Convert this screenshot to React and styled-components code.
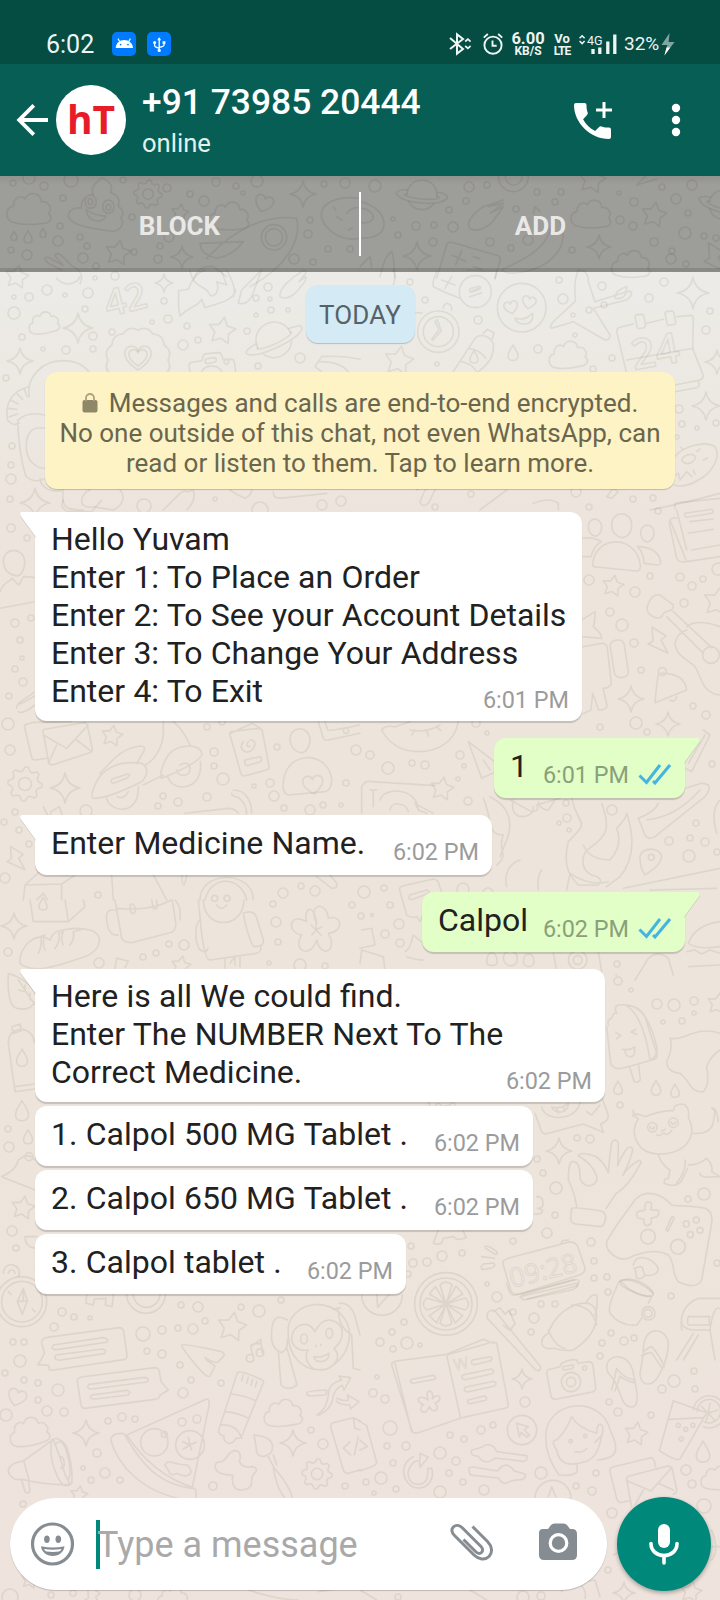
import React from 'react';
import styled, { createGlobalStyle } from 'styled-components';

const Global = createGlobalStyle`
  * { box-sizing: border-box; }
  body { margin: 0; font-family: Roboto, "Noto Sans", sans-serif; background: #eee4dc; }
`;

const Screen = styled.div`
  width: 720px;
  height: 1600px;
  display: flex;
  flex-direction: column;
  overflow: hidden;
`;

/* ---------- status bar ---------- */

const StatusBar = styled.div`
  flex: none;
  height: 64px;
  padding: 24px 0 0 46px;
  display: flex;
  align-items: center;
  background: #054c43;
  color: #eef5f3;
`;
const Clock = styled.span`
  width: 66px;
  padding-top: 1px;
  font-size: 25px;
  line-height: 39px;
`;
const AppBadge = styled.svg`
  width: 24px;
  height: 24px;
  margin-right: 11px;
  border-radius: 5px;
  background: #007bff;
`;
const StatusIcons = styled.div`
  margin-left: auto;
  margin-right: 45px;
  display: flex;
  align-items: center;
`;
const StatusGlyph = styled.svg`
  display: block;
  width: ${(p) => p.$w}px;
  height: 24px;
  margin-right: ${(p) => p.$gap || 0}px;
`;
const Stacked = styled.div`
  width: ${(p) => p.$w}px;
  margin-right: ${(p) => p.$gap}px;
  display: flex;
  flex-direction: column;
  align-items: center;
  white-space: nowrap;
  font-weight: 700;
  span:first-child { font-size: ${(p) => p.$top}px; line-height: 13px; }
  span:last-child { font-size: 12px; line-height: 12px; }
`;
const Battery = styled.span`
  width: 37px;
  font-size: 19px;
  line-height: 24px;
`;

/* ---------- chat header ---------- */

const Header = styled.header`
  flex: none;
  height: 112px;
  padding-left: 16px;
  display: flex;
  align-items: center;
  background: #075e54;
  color: #fff;
`;
const BackIcon = styled.svg`
  width: 33px;
  height: 34px;
`;
const Avatar = styled.div`
  width: 70px;
  height: 70px;
  margin-left: 7px;
  border-radius: 50%;
  background: #fff;
  color: #e81c28;
  display: flex;
  justify-content: center;
  font: 700 39px/67px "Open Sans", sans-serif;
`;
const Contact = styled.div`
  flex: 1;
  margin-left: 16px;
  height: 112px;
  padding-top: 17px;
`;
const ContactName = styled.div`
  font-size: 35.4px;
  font-weight: 500;
  line-height: 43px;
  white-space: nowrap;
`;
const Presence = styled.div`
  font-size: 25.6px;
  line-height: 39px;
  color: #e3f1ee;
`;
const HeaderIcon = styled.svg`
  width: ${(p) => p.$w}px;
  height: 44px;
  margin-right: ${(p) => p.$gap}px;
`;

/* ---------- conversation ---------- */

const Chat = styled.main`
  flex: 1;
  position: relative;
  display: flex;
  flex-direction: column;
  background: linear-gradient(#ecebe7 0, #ecebe7 110px, #ede5dd 330px, #ede5dc 900px, #eee3dd 1424px);
`;
const Wallpaper = styled.svg`
  position: absolute;
  inset: 0;
  width: 720px;
  height: 1424px;
  fill: none;
  stroke: rgba(130, 128, 100, 0.14);
  stroke-width: 1.6px;
  stroke-linejoin: round;
  stroke-linecap: round;
  font-family: "Open Sans", sans-serif;
  g > * { vector-effect: non-scaling-stroke; }
`;
const ActionBar = styled.div`
  position: relative;
  flex: none;
  height: 96px;
  display: flex;
  align-items: center;
  background: linear-gradient(rgba(0, 0, 0, 0.38), rgba(0, 0, 0, 0.335) 8px);
  border-bottom: 4px solid rgba(0, 0, 0, 0.07);
`;
const Action = styled.button`
  flex: 1;
  padding: 8px 0 0;
  border: 0;
  background: none;
  color: #e9e8e6;
  font: 700 26px/32px Roboto, sans-serif;
`;
const Divider = styled.div`
  width: 2px;
  height: 64px;
  margin-top: 4px;
  background: #fff;
`;
const Messages = styled.div`
  position: relative;
  flex: 1;
  display: flex;
  flex-direction: column;
  align-items: flex-start;
  padding: 13px 35px 0;
`;
const DayChip = styled.div`
  align-self: center;
  width: 109px;
  height: 58px;
  margin-bottom: 29px;
  border-radius: 12px;
  background: #d4eaf4;
  box-shadow: 0 1px 1px rgba(0, 0, 0, 0.2);
  color: #56626a;
  font-size: 26px;
  line-height: 61px;
  letter-spacing: 0.2px;
  text-align: center;
`;
const Notice = styled.div`
  align-self: center;
  width: 630px;
  height: 117px;
  margin-bottom: 23px;
  padding-top: 16px;
  border-radius: 12px;
  background: #fef3c4;
  box-shadow: 0 1px 1px rgba(0, 0, 0, 0.2);
  color: #6a664e;
  font-size: 26px;
  line-height: 30px;
  text-align: center;
  white-space: nowrap;
`;
const Lock = styled.svg`
  width: 16px;
  height: 20px;
  margin-right: 11px;
  vertical-align: -1px;
`;
const Bubble = styled.div`
  position: relative;
  align-self: ${(p) => (p.$out ? 'flex-end' : 'flex-start')};
  width: ${(p) => p.$w}px;
  min-height: 60px;
  margin-bottom: ${(p) => (p.$grouped ? 4 : 17)}px;
  padding: ${(p) => (p.$multi ? '8px 13px 11px 16px' : '9px 13px 13px 16px')};
  display: flex;
  flex-direction: column;
  align-items: flex-start;
  border-radius: 12px;
  ${(p) => p.$tail && (p.$out ? 'border-top-right-radius: 0;' : 'border-top-left-radius: 0;')}
  background: ${(p) => (p.$out ? '#e1ffc7' : '#fff')};
  box-shadow: 0 1.5px 1px rgba(0, 0, 0, 0.17);
`;
const Tail = styled.svg`
  position: absolute;
  top: 0;
  ${(p) => (p.$out ? 'right: -15px; transform: scaleX(-1);' : 'left: -15px;')}
  width: 16px;
  height: 26px;
  fill: ${(p) => (p.$out ? '#e1ffc7' : '#fff')};
  filter: drop-shadow(0 1px 0.5px rgba(0, 0, 0, 0.15));
`;
const Line = styled.div`
  color: #212121;
  font-size: 32px;
  line-height: 38px;
  white-space: pre;
  word-spacing: 0.3px;
`;
const LastRow = styled.div`
  width: 100%;
  height: 38px;
  display: flex;
  justify-content: space-between;
  align-items: flex-end;
`;
const Meta = styled.div`
  display: flex;
  align-items: center;
  gap: 10px;
  margin-bottom: ${(p) => (p.$multi ? -4 : -4)}px;
  color: ${(p) => (p.$out ? '#8aa07a' : '#9b9b9b')};
  font-size: 23.4px;
  line-height: 27px;
  white-space: nowrap;
`;
const Ticks = styled.svg`
  width: 33px;
  height: 22px;
  margin: 0 1px 3px -1px;
`;

/* ---------- composer ---------- */

const Composer = styled.footer`
  position: relative;
  flex: none;
  height: 103px;
  padding: 0 9px 9px 10px;
  display: flex;
  align-items: center;
  gap: 10px;
`;
const InputPill = styled.div`
  width: 597px;
  height: 92px;
  padding: 0 26px 0 21px;
  display: flex;
  align-items: center;
  border-radius: 46px;
  background: #fff;
  box-shadow: 0 1px 1px rgba(0, 0, 0, 0.2);
`;
const FieldIcon = styled.svg`
  width: 44px;
  height: 44px;
  margin-left: ${(p) => p.$ml || 0}px;
  overflow: visible;
`;
const Caret = styled.i`
  width: 4px;
  height: 49px;
  margin-left: 21px;
  background: #00897b;
`;
const Placeholder = styled.span`
  flex: 1;
  margin-left: -3px;
  padding-top: 1px;
  color: #a9a9a9;
  font-size: 36px;
  line-height: 44px;
  white-space: nowrap;
`;
const MicButton = styled.button`
  width: 94px;
  height: 94px;
  padding: 0;
  border: 0;
  border-radius: 50%;
  background: #00897b;
  box-shadow: 0 2px 4px rgba(0, 0, 0, 0.3);
  display: flex;
  align-items: center;
  justify-content: center;
`;

/* ---------- wallpaper doodles ---------- */

const bubbles = `13,183,3 29,178,6 44,186,4 71,180,7 63,198,3 123,180,3 167,188,4 190,194,3 204,201,5 216,182,4 236,186,3 243,193,2 257,181,6 345,183,5 324,184,3 60,226,3 80,237,3 58,241,5 11,250,3 27,255,5 87,246,3 83,258,5 96,266,3 132,217,3 134,252,3 158,259,4 160,246,3 169,237,5 310,220,3 308,234,4 294,259,5 313,262,3 328,249,3 350,249,3
375,186,6 469,187,5 487,185,3 466,201,3 393,219,2 449,210,3 416,226,4 434,225,3 453,227,5 398,235,3 433,242,4 490,242,4 511,248,3 516,209,3 537,192,3 561,192,3 555,202,3 634,202,4 619,193,2 662,187,3 692,185,5 676,199,5 688,213,3 620,220,4 633,226,4 654,242,4 685,233,6 704,236,3 716,238,3 672,251,3 671,259,5 686,264,3 572,250,3 528,240,5
14,297,2 29,297,4 47,290,5 65,295,2 88,293,5 95,278,2 115,276,4 14,313,6 22,337,3 85,309,3 93,336,4 43,349,2 66,350,4 93,349,3 6,378,3 12,446,3 11,465,3 11,479,5 10,499,3 112,332,3 152,322,2 168,319,4 164,301,3 187,326,3 183,345,5 198,340,3 247,331,3 256,315,2 271,310,3 256,298,3 270,299,2 268,287,4 288,310,2 300,358,5 258,366,3 144,506,7 215,499,2 322,505,5 341,501,5 260,510,8
410,282,3 425,300,3 478,320,4 437,364,2 575,335,2 538,349,4 559,280,3 563,299,5 602,286,4 604,305,3 589,310,3 573,315,2 612,358,3 593,369,3 664,282,4 649,298,4 710,311,3 706,330,4 679,409,4 682,424,3 697,428,2 716,423,3 677,437,2 471,494,3 576,492,5 633,499,3 653,498,3 435,507,3 589,507,3
11,528,4 27,538,3 31,618,3 15,623,4 20,640,3 22,658,2 15,669,3 23,682,4 9,696,3 8,724,6 10,750,5 207,727,3 222,722,3 214,752,4 214,766,3 223,779,6 277,747,3 254,786,2 270,783,4 274,796,5 163,796,3 158,806,3 178,802,4 207,797,4 86,811,6 15,812,3 19,830,3 4,822,3 29,844,3 284,808,3 310,810,5 323,805,3 341,805,2 346,783,3 356,750,5 5,878,5 283,893,5 301,886,3 315,891,5 98,895,3
658,511,3 589,580,5 635,592,5 650,576,3 680,577,4 692,586,4 703,579,3 718,569,6 684,603,4 610,612,4 622,625,6 634,643,4 641,670,3 600,727,3 636,723,6 647,732,3 693,706,3 706,715,4 476,723,4 487,733,2 370,755,4 388,768,6 412,763,3 425,765,4 460,755,4 464,766,2 468,801,4 458,779,2 712,764,3 696,823,3 669,841,4 690,838,3 705,842,4 689,856,6 717,852,3 612,810,5 567,818,4 559,823,2 569,830,2 566,803,3 364,892,6 384,888,3 390,905,3 361,916,3 372,915,1.5 399,924,5 385,934,4 400,943,4 617,964,3 463,889,6 488,893,5
273,904,3 276,922,5 278,942,3 352,905,3 8,952,4 99,963,5 143,957,3 156,953,3 169,944,3 184,945,5 8,1129,3 9,1147,5 12,1231,5 16,1248,3 269,963,2 300,965,6 325,966,3
618,981,4 631,990,2 657,1004,5 674,1005,6 694,1001,4 694,1013,2 682,1021,3 663,1022,2 620,1105,3 577,1138,3 590,1139,4 537,1159,3 543,1173,3 556,1188,6 555,1215,3 547,1233,5 513,1241,3 591,1242,4 594,1261,3 594,1278,3 607,1277,3 608,1292,3 688,1199,3 704,1194,6 717,1263,3 411,1246,3 413,1263,4 427,1262,4 442,1256,5 462,1253,3 487,1284,2 408,1274,3
62,1312,4 54,1327,4 74,1317,3 90,1318,2 13,1342,3 24,1342,3 20,1361,6 5,1373,3 24,1380,3 38,1383,3 58,1390,6 38,1400,3 47,1411,5 64,1412,4 6,1415,6 108,1421,3 122,1417,4 135,1419,3 97,1453,4 83,1468,2 105,1473,5 91,1480,3 120,1480,3 181,1305,3 198,1307,5 143,1334,7 162,1330,4 178,1328,3 193,1329,5 205,1321,3 147,1351,3 162,1354,4 180,1365,3 191,1380,3 183,1393,5 221,1383,3 241,1307,3 259,1311,6 281,1300,3 311,1430,3 323,1444,5 213,1486,4 345,1486,3 182,1422,4 197,1419,4 10,1597,8 51,1595,3 73,1593,3 135,1595,6 23,1504,3
404,1322,3 392,1332,3 380,1342,4 393,1349,3 407,1343,6 420,1345,2 377,1377,2 373,1393,4 385,1399,4 390,1428,7 387,1446,3 406,1446,4 393,1463,3 381,1478,6 366,1482,3 374,1493,2 396,1489,3 450,1435,3 464,1439,3 481,1430,4 493,1425,3 440,1453,6 456,1461,4 449,1473,3 463,1482,3 440,1492,6 484,1490,5 525,1402,5 541,1473,6 596,1473,3 576,1486,3 592,1491,4 612,1513,5 541,1304,3 555,1304,3 534,1318,5 531,1332,3 513,1312,3 497,1297,5 611,1333,3 602,1343,3 624,1341,4 634,1338,3 600,1356,3 671,1296,3 694,1371,3 674,1381,6 662,1389,4 695,1389,3 609,1402,3 618,1412,4 651,1415,3 686,1470,5 692,1484,4 704,1506,7 608,1570,3 523,1597,6 541,1596,4 398,1597,3`
  .split(/\s+/)
  .map((s) => s.split(',').map(Number));

const stars = [[180, 213, 9], [118, 253, 13], [17, 277, 12], [222, 331, 14], [399, 361, 15], [592, 180, 14], [654, 215, 13], [112, 736, 11], [613, 586, 11], [442, 789, 12], [718, 602, 15], [181, 966, 10], [23, 1208, 12], [718, 1004, 11], [232, 1327, 15], [636, 1434, 12], [691, 1592, 11], [79, 1495, 9], [30, 1580, 9]];
const sparkles = [[303, 194, 13], [182, 257, 11], [417, 256, 14], [599, 247, 12], [78, 328, 15], [20, 361, 13], [164, 283, 9], [35, 503, 15], [693, 293, 16], [706, 406, 14], [717, 362, 12], [65, 788, 15], [631, 699, 13], [668, 724, 12], [14, 926, 13], [559, 1151, 13], [86, 1433, 13], [293, 1443, 13], [522, 1379, 10], [624, 1593, 11]];
const clouds = [[28, 209, 1.45, 0], [228, 216, 1.3, 0], [590, 214, 1.3, 0], [630, 264, 1.25, 0], [43, 323, 1, -10], [567, 355, 1.25, -6], [28, 1432, 1.3, -12], [282, 1413, 1.25, -5], [717, 1478, 1.1, 0], [172, 1598, 1, 0]];
const hearts = [[264, 203, 1, 18], [138, 357, 1.45, 0], [138, 357, 1, 0], [17, 1397, 1, 18], [313, 784, 1.1, -6], [511, 307, 0.75, -12], [529, 302, 0.75, 12]];
const drops = [[14, 236, 0.6], [28, 237, 0.8], [43, 233, 0.6], [513, 353, 1], [22, 1111, 1.3], [28, 1137, 0.9], [618, 1088, 0.85], [656, 1088, 0.95], [675, 1091, 0.85], [703, 1452, 1.35], [22, 1058, 1.1], [474, 357, 0.8], [43, 904, 0.8]];
const gears = [[148, 194, 14], [25, 784, 17], [317, 1474, 15]];
const planets = [[422, 195, 15, 5], [274, 340, 18, -25], [724, 205, 15, 15]];
const bolts = [[657, 640, 1], [15, 858, 0.9], [714, 257, 1.1], [92, 1597, 0.9]];

const polar = (r, a) => `${(r * Math.cos(a)).toFixed(1)} ${(r * Math.sin(a)).toFixed(1)}`;
const starPath = (r) =>
  'M' + Array.from({ length: 10 }, (_, i) => polar(i % 2 ? r * 0.52 : r, (i * Math.PI) / 5 - 1.4)).join('L') + 'Z';
const sparklePath = (r) => `M0 ${-r}Q${r * 0.15} ${-r * 0.15} ${r} 0Q${r * 0.15} ${r * 0.15} 0 ${r}Q${-r * 0.15} ${r * 0.15} ${-r} 0Q${-r * 0.15} ${-r * 0.15} 0 ${-r}Z`;
const gearPath = (r) =>
  'M' + Array.from({ length: 32 }, (_, i) => polar(i % 4 < 2 ? r : r * 0.78, (i * Math.PI) / 16)).join('L') + 'Z';
const badgePath =
  'M' + Array.from({ length: 13 }, (_, i) => {
    const a = (i * 2 * Math.PI) / 12;
    return i ? `Q${polar(36, a - Math.PI / 12)} ${polar(30, a)}` : polar(30, a);
  }).join('') + 'Z';

/* Larger drawings, grouped by the patch of wall they belong to; three units make one pixel. */
const patches = [
  [0, 0, `M205 650c0-20 20-30 40-25c-5-25 15-40 35-42c-10-25 5-30 25-50c25 10 35 25 27 45c20 5 30 20 22 40c15 10 20 25 8 35c15 20-5 45-35 40c-60-10-110-15-122-43z M258 628c20 15 40 20 60 20c-10 25-55 20-60-20z M255 605a17 20 0 1 0 34 0a17 20 0 1 0-34 0 M264 605a7 9 0 1 0 14 0a7 9 0 1 0-14 0 M308 620a17 20 0 1 0 34 0a17 20 0 1 0-34 0 M318 622a7 9 0 1 0 14 0a7 9 0 1 0-14 0
   M620 775C700 690 800 640 890 655C905 720 860 800 750 860 M600 730l130-5c-20 25-50 45-80 50c-25-5-50-20-50-45z M784 712a38 38 0 1 0 76 0a38 38 0 1 0-76 0 M796 712a26 26 0 1 0 52 0a26 26 0 1 0-52 0 M580 840c10-30 30-45 60-40l40 30 M145 790q-20-20 0-18l45 25l-25-30q5-12 20 0l30 30c40 20 30 40 25 55 M145 790l40 20
   M1080 595c-60-8-125 10-115 60c15 45 70 70 115 60 M1040 640c10-15 25-18 40-18 M1010 650l15 10M1000 620l8 12M1045 690l12-6`],
  [360, 0, `M0 605c50 10 80 45 70 80c-10 25-40 30-70 30 M0 625c25 0 40 15 40 30c-10 15-30 15-40 12 M430 600l-60 20c-30 20-55 50-40 65c20 15 60-5 75-30l25-35l-40 20l40-30l-45 10z M415 530a45 45 0 0 0 90 0 M436 530a25 25 0 0 0 50 0
   M425 810c60-30 140-60 150-140l20-20c20 50 25 90-30 135c-40 30-120 45-140 25z M565 690l30 10 M260 735q5-10 15-8l140 40q8 5 5 15l-15 55M260 735l-30 100M276 766l40 18M305 752l-18 42M340 800l25 8 M340 770l20 6 M830 555l30-30M830 555l60-18 M60 830c10-40 15-60 35-75c10 20 5 50 10 80M0 800l30-30l5 30
   M520 640l5-20l15 15`],
  [0, 270, `M540 138c-10-40 0-60-5-75l30-5c15-40 30-50 50-58M540 138c30-30 50-25 65-50l10 25c50-15 90-25 92-55M570 0c10 60 45 40 60 75c15 10 30-15 20-40l30 10l-15-40M700 80c10-30-10-60-20-80M715 100l10-40l60-60M715 100c20 5 30-5 40-20l30-80 M840 80c-5-25 40-60 65-75q15-10 12 5l-20 25l20-15q5 10-15 30c-20 30-45 40-62 30z M170 25c20 25 60 20 70-5
   M570 305l-3-18q0-8 8-10l30-5l5-15q3-6 10-6l35-3q8 0 10 8l4 12l25 0q8 0 9 8l4 30M615 275q0-8 6-9l20-3q8 0 8 6q0 6-6 8l-20 4q-7 0-8-6z M605 305c10-22 50-22 60 0 M672 275a7 7 0 1 0 14 0a7 7 0 1 0-14 0 M945 290l20-30q60-5 115 8M945 290l20 15M960 275q60 0 85 30
   M88 380c-10-60 40-108 100-108c40 0 65 15 80 35 M88 350c-50 10-75 50-65 100c10 15 25 15 35 10M72 356l10 25M50 370l18 18M32 390l22 12M25 415l25 3M28 440l25-8 M55 450c20-20 50-22 78-15M53 450c2 60 12 130 25 170c20 15 40 15 57 5M135 475c-50-10-60 30-55 70c5 30 30 50 55 50M120 625c0 30 40 45 70 35
   M190 660c-10 60 20 60 60 60M270 660c-30 10-40 60 10 50l60 10c40-20 30-50 20-60M490 720l50-50q10-10 20-5q10 0 20-5q10 30-20 60M690 660q20 15 45 25q20-10 20-25M820 665c0 20 10 20 40 18l120-13`],
  [360, 270, `M230 5q-15 35-10 45q40 20 80 35M320 0c30 0 90 5 90 0l-5 25M245 30l40 15M275 20l-20 35 M298 65a48 48 0 1 0 96 0a48 48 0 1 0-96 0 M330 65l30-12M330 80l35-12 M330 65q-5-8 5-10l20-6q10 0 5 8l-25 10z M100 0q10 15 0 45
   M412 113a73 73 0 1 0 146 0a73 73 0 1 0-146 0 M465 145c20 5 40 0 52-15c5 15-5 32-20 32c-15 0-30-5-32-17z M655 0c-20 50-5 70-10 95l-60 55q-20 20-10 25l65-20l95 55q15 0 15-15l-50-80l100-25c20-15 20-30 0-25l-95 30l-20-60c0-25-10-35-30-35z M765 85c0-20 15-30 35-35c0 25-10 40-35 35z
   M173 185a62 62 0 1 0 124 0a62 62 0 1 0-124 0 M190 185a45 45 0 1 0 90 0a45 45 0 1 0-90 0 M225 155l12 25l-20 25q-5 3 2 6l25-28l-12-34z M250 115c0-20 25-20 25 5 M165 130q10-5 20 0 M280 305l65-100c20-20 60 0 55 30c0 20-10 45-45 70M325 235q35 5 52 30M305 275q30 5 45 30M370 190l12-12l20 10l-5 18
   M800 310l-30-125q0-10 10-13l40-10M860 160l50-12M950 140l42-4q8 0 8 10l-2 90l32 80q0 10-10 14l-75 15M800 270l200-35M825 140q0-5 8-6l13-1q5 0 6 8l5 25q0 8-8 8l-12 2q-5 0-6-6z M915 130q0-5 8-6l13-1q5 0 6 8l5 25q0 8-8 8l-12 2q-5 0-6-6z M945 365l65-12q12-5 5-18
   M945 560c20-30 90-50 120-30c20 30-10 80-50 100c-30 20-60 20-72 15M965 570c5-15 30-22 40-12c5 15-25 35-40 12z M1010 545l10-8M1030 570l12-6M1000 600l5 12M970 540l-8-8M940 620l15-10l5 20l20-25l15 15 M170 660l25-15M195 660l40-20l-30 60q-20 15-25-5z M520 700q50-20 75 0v20 M740 680l20-25l15 10l-20 20z M870 720q100-20 210-50M360 720l80-60`],
  [0, 500, `M10 185c0-45 62-45 64 0c0 30-15 45-25 42c-25-3-37-20-39-42z M0 325l105-20M0 275c10-30 30-30 36-40l20 20l15-25q30 0 34 5M55 610l55-38M50 625q0-15 15-15l45-25M55 635q10 10 50-20M190 0c-10 20 0 35 25 35h60l30-35
   M130 700q-5-8 5-12l115-20q10 0 12 8l15 70q0 10-8 12l-110 36q-10 2-13-8z M130 705l70 40l65-70M145 790l25-55M275 755l-45-35 M80 672q-10 5-5 15l20 85q2 8 10 8l35-5M75 675l25-8l115-3
   M280 895q-10-5 5-40c20-50 70-75 140-65c20 10 20 35 0 55c-30 15-100 50-145 50zM300 820c30-30 60-75 120-82q20 0 10 18l-20 35M335 838l48-16q12 2-2 12l-40 16q-12-2-6-12M318 890c10 50 100 60 97-30M352 890q20 10 33-15M485 835q-10-20 20-70c30-35 95-35 100-5c5 10-30 40-120 75zM503 830c20 55 110 35 98-45M530 810c0 20 40 25 40-5c0-15-15-20-30-10M490 660v40c0 40-30 85-55 95M430 855l60-30M520 665q30 25 50 70
   M690 705q-3-8 5-11l80-9q10 0 12 8l20 105q2 10-8 12l-65 18q-10 0-12-10zM692 700l65-30l25 15M730 725q-15 20 5 30q20 5 30-20q0-15-15-15M745 725q-10 15 5 15M735 780l45-10q8 5 2 15l-42 12q-8-5-5-17M870 720c0-45 58-45 60 0c0 22-15 40-27 38c-18-3-30-15-33-38zM850 850c5-100 130-100 145-15c0 25-5 35-20 40l-110 10c-15-5-17-20-15-35z
   M955 665l15 50q5 8 15 5l95-20M975 665l8 25q5 5 95-15M1030 692a8 8 0 1 0 16 0a8 8 0 1 0-16 0M130 920l15 30q5 5 8-15l25-15l10 30 M700 870c35 0 55 30 55 70M695 880q0 10 20 12c20 15 25 30 25 50M555 940l130-15q20 0 30 15
   M75 1155l60-55l10 20l60 5M75 1155l-5 45M75 1155l110-3l40-27M185 1152v48M110 1200l20-20l12 20M335 1125l5 75M460 1125l40 75M545 1125q5 60 15 0M600 1200c0-90 160-90 160 0M615 1200c20-80 110-70 125 0M635 1195a9 9 0 1 0 18 0a9 9 0 1 0-18 0M672 1195a9 9 0 1 0 18 0a9 9 0 1 0-18 0M950 1130l45 35q20 0 15-15l-20-25`],
  [360, 500, `M685 80c0-30 38-30 40 0c0 20-12 30-20 28c-12-3-20-12-20-28z M755 75c0-45 60-45 60 0c0 25-15 38-30 38c-15-3-30-15-30-38zM842 98c0-30 40-30 40 0c0 18-12 28-20 28c-12-3-20-12-20-28zM698 195c5-90 130-95 143 0q2 20-15 18l-115-12q-12 0-13-6zM668 115q35-5 55 10q-20 10-30 45l-25 0M832 140q60 0 70 45q0 10-10 10l-40-5q0-30-20-50z
   M945 25q-5-15 10-17l125-13M930 60l50 125l100-15M950 30l30 120M930 60q5-10 20-5M930 60q-3 10 0 20l20 95q10 15 30 10M975 40l80-12q10 5 0 12l-75 12q-10-5-5-12M990 65l70-8M985 100l75-12M995 150l85-15
   M866 310q10-30 35-25q10 10 40 30l-5 15q-30 5-30 20q-20 10-40-10q-10-15 0-30zM920 350l110 110M940 335l115 108M1028 465a25 25 0 1 0 50 0a25 25 0 1 0-50 0M945 430q5-30 35-40M980 380q30-25 100 0M945 430c5 40 40 50 60 70c20 30 20 80 75 85
   M905 520q70 0 75 50l-95 38q5-60 10-85zM895 515a12 12 0 1 0 24 0a12 12 0 1 0-24 0M930 600q15 10 20-10 M665 360l40-25q0 30-5 45q25 20 25 35l-60-5M668 440l60-10q12 0 14 15l12 105q-5 15-25 15l12 50q0 15-25 15l-18-50l-5 50l-25 12M750 435q5-15 25-15q15 0 18 15l12 80q0 15-20 18q-20 0-22-15z
   M65 690q10-15 40-10l45-15M65 690c20 40 60 65 110 65c60 0 110-30 120-90M150 690q50 10 90-15M165 690l-10 15M200 690l5 18M230 680l12 12M325 725l105 80l-65 30zM370 780l20 30M5 860q10-20 30-15l190 12M5 860v80M30 870h20M40 870v50M60 900c10-40 110-40 115 30M90 930c5-30 50-20 55 5M165 910l55 30M165 910l10 20l25 10
   M370 895c30 70 10 110 60 110c-20 40 20 60-20 90M390 890c60 30 70 80 50 130l-20 50M450 900l65 35q25 0 15-20l70-20M460 900q-10 40 20 50q40 0 40-30M535 905q5 25 30 25l20-30M635 895c20 90 60 60-10 130c-20 80 10 110 30 130l60 0q20-20-20-30c-40-20-30-70 0-85c40-30 60-50 30-130M770 985c10-10 30-30 30-45c20 60 30 130-20 190l-40 30M770 985q20 50-20 95q-60 0-80-45M440 1160c-10-40 10-70 40-80M545 1110q-15 20-10 60M620 1170l10-50q60 40 115 25
   M835 955q50-20 60-45M835 955l20 50q10 15 30 5l150-120q30-40-10-40l-50 15M860 960q90-10 160-90M840 1070c5-30 60-30 65 0c-5 30-30 40-50 55q-15-20-15-55zM865 1072a9 9 0 1 0 18 0a9 9 0 1 0-18 0M790 1165l290-60M870 1170l200-5M1080 900q-30 30-10 100M1030 690l20 15l-55 110l-20-10M985 790l50-85
   M120 1175q-5-15 10-18l90-20q10 0 15 10l10 30M120 1175l20 70q10 10 30 5l10 15l10-25M150 1185l50-15q15 5 0 12l-40 15q-20 5-10-12M135 1355c20-10 20-40 25-50l30 25l20-25M140 1370q30 10 50 10M5 1290l30-5l10 50l-45 10M0 1390l5-40l65 20l5 40
   M380 1385c0-35 30-35 32 0c0 15-32 15-32 0M430 1375c0-30 40-30 42 0c0 30-38 30-42 0M490 1385c0-30 32-30 32 0c0 20-32 20-32 0M625 1380a28 28 0 1 0 56 0a28 28 0 1 0-56 0M640 1380a13 13 0 1 0 26 0a13 13 0 1 0-26 0M580 1360l10 50M715 1355l10 60M825 1440l40-65q30-25 60 0l15 50M985 1330q20-55 95-65M985 1330q30 20 95 10M980 1355l25-5l20 12l25-12l30 10M985 1400l95-5`],
  [0, 900, `M90 0l10 65l105 0l50-45l-5-20M205 65l-10-65M60 190c-5-50 50-100 90-70q10-30 40-30q40-10 80 0c50 15 30 70-30 85c-60 20-140 50-180 15M115 160q15-30 5-50l15-5q-10 20 0 45M165 145q20-30 10-45l15-5q-10 20 0 40M210 135q15-20 10-40l20-5
   M345 0l20 115q10 15 35 12l115-30q15-10 12-30l-10-67M350 25q100 10 165-25M390 15q10-8 14 5l2 15q-8 12-14 0zM455 0l5 25q10 5 12-5l-3-20M345 30q-30-5-25 30q5 50 35 45M525 0q20 20 15 60M595 0l10 100q10 80 25 80l140-20q15-5 12-20M610 0c0 90 120 90 122 0M650 15q15 20 30 0M730 40q35-15 42 20l18 60q5 20-30 20q-20-40-30-100zM600 60q-15 10-12 60l8 25q20 20 28 0M675 175v30M720 172v28M690 190l15-20v25
   M950 70c-30-60 30-70 35-15c40-15 50 40 0 45c30 50-20 80-35 20c-20 60-75 30-45-15c-50-10-35-70 15-40c-10-40 20-60 30 5zM948 90l-15-15M948 90v-20M948 90l18-10M948 90l15 15M948 90l-12 14M345 205l5-30l35 8l-10 20M50 325q-30-10-25-105q60 20 80 60M50 325q40 10 55-20M55 240l50 75M75 275v-20M75 275l-20-5M90 300v-20M35 380l25-8l5 20l-25 8zM25 430q0-40 40-42q35 5 38 40M25 430l20 145l60-8M45 560l60-8
   M5 830q45-20 50-50q30-25 50 0M5 830l100 40M75 770a12 12 0 1 0 24 0a12 12 0 1 0-24 0M75 1010h35M75 1010q0 30 30 35M10 1120a24 24 0 1 1 45 10M25 1120a10 10 0 1 1 20 0`],
  [360, 960, `M745 195q-5-15 10-20q5-20 15-15q-10-20 5-25q60-5 80 35l35 110q5 20-20 20M800 137q60-5 92 130q-5 30-22 33q-20-130-70-163zM740 200l12 110q10 20 35 15l90-25M808 320l15 45q10 5 18-5l-5-45M768 218l14 8l-12 10M828 208l-15 8l16 7M787 268q20 5 38-7M795 268q0 25 20 22q12-5 8-27M930 235c40 10 80-40 150-15M930 235q10 30-10 70q0 30 40 35c30 20 30 60 70 55q20-20 10-75q10-30 40-50
   M770 45l-2 0M820 470q0-15 35 0q50-20 85-18q0-20 30-20q20 10 15 40c30 60-10 110-90 110c-60 0-90-60-60-105q-15-10-15-27zM863 502a14 14 0 1 0 28 0a14 14 0 1 0-28 0M926 488a14 14 0 1 0 28 0a14 14 0 1 0-28 0M871 500a6 6 0 1 0 12 0M934 486a6 6 0 1 0 12 0M890 525q10 5 20-6q15 10 25-8M905 513l10-5M995 520q60 5 65-35q10-40-5-40q15-5 20 40M895 585q10 30 35 45l-5 25q-15 0-12 15q30 15 50-5l20-40M975 600q5 30-25 70M985 615q30 0 55-20q20 20 15 40l25 15M1020 640q-5 15 60 10
   M525 460l20 55q5 10 20 5l105-28l60 25l-8-25q30-10 20-35l-15-40M545 440c10 50 110 40 115-15M575 442q30 5 50-12q0 20-18 25q-20 5-32-13M590 445l5 15M610 440l4 14M680 455l15 10l25-30 M635 745q5-5 90 8q12 5 12 20q-3 25-15 27l-75-8q-15-3-15-15zM650 740q-5-40-25-80q0-60 15-55q20 0 20 45q0 20 25 28q30-5 25-30q-15-40-55-60q5-15 50 0q30 20 40 50q5-60 10-90q10-15 20 0q0 40-2 70q10-30 30-55q15-5 15 8q-10 40-30 75q20-30 50-45q10 5 0 15q-30 60-70 85l-30 45
   M740 845c20-40 60-90 85-125c30-35 80-20 110 15c20 5 60 0 100 10q25 10 20 45l-30 170q-15 30-70 5c-20-20-10-60-30-80c-40-20-80-10-120 10c-30 10-70-20-65-50zM855 735q5-15 20-5l-2 20l20 0q8 10-2 20l-18 5q5 20-12 22q-10 0-10-20l-18-3q-8-15 3-20l18-3zM918 808l18-38q8 0 5 8l-18 36zM842 830a22 22 0 1 0 44 0a22 22 0 1 0-44 0M932 860a22 22 0 1 0 44 0a22 22 0 1 0-44 0M970 792a9 9 0 1 0 18 0a9 9 0 1 0-18 0M1000 780a9 9 0 1 0 18 0a9 9 0 1 0-18 0M982 824a9 9 0 1 0 18 0a9 9 0 1 0-18 0M1011 811a9 9 0 1 0 18 0a9 9 0 1 0-18 0
   M430 915q-5-15 15-20l180-48q20-3 28 12l22 65q0 15-15 20l-180 58q-20 5-28-12zM485 1005l150-45q20-5 22 5l-5 12l-150 40M603 850l5-8l18-2M820 915c10-40 60-20 75 10c0 15-15 25-40 20c-10-10 0-25-15-25l-18 5M855 945q-10 15-25 10l-5-30M780 965q20-15 60 0q40 20 40 40q-10 10-60-10q-40-15-40-30zM375 860q10-5 35 15q5 10-5 8l-28-18M365 890l38 5M370 912l30-3q10 8-5 15l-28 5q-8-8 3-17
   M220 850l15-40M220 850q10 5 25 0l5-15l30-5l10 8q20 0 28-5l-8-20M530 710q20 0 18 15q5 20-15 20l15 5q0 15-25 12M205 430q0-8 5 8M225 440q10-20 20 0l25-5q10-15 15 0`],
  [0, 1280, `M-10 65a74 74 0 1 0 150 0a74 74 0 1 0-150 0M5 65a60 60 0 1 0 122 0a60 60 0 1 0-122 0M70 25l-18 40l15 38l15-40zM52 65l30-2M70 25v38M25 35l8 8M105 95l-8-8M260 45l-2 25l22 5l3-18l35-2l-2 20l20 5l5-40M380 42a58 58 0 1 0 116 0M400 42a40 40 0 0 0 80 0
   M125 190q0-15 12-17l220-30q12 0 14 12l10 70q0 12-10 14l-215 32q-10 2-10-15l-33-2q15-20 20-35zM160 195l150-22q18 2 10 14l-150 22q-20 0-10-14M168 225l140-18q15 5 5 14l-135 20q-20-3-10-16M232 305q0-12 12-14l220-28q12 0 14 12l5 30l22 25l-25 15q0 10-15 13l-210 27q-10 0-12-10zM268 313l165-21q18 2 8 14l-165 21q-20 0-8-14M275 345l105-14q15 3 5 14l-100 12q-20 0-10-12
   M545 195q5-5 120 20q12 5 5 15l-15 15q-10 8-40-12q5 10 30 25l-15 30q-10 10-60-55q-25-30-25-38zM760 230l-8-30l30-22l5 40M752 200q0-10 30-10M740 235a11 8 0 1 0 20 0a11 8 0 1 0-20 0M770 218a11 8 0 1 0 20 0a11 8 0 1 0-20 0
   M865 140c20-90 160-90 183 10c5 60-30 100-70 118c-70 10-120-40-113-128zM875 175c0-40 50-60 70-20c30-60 80-30 82 0c0 30-15 40-25 50c30 30-10 65-40 65c-40 0-50-40-38-60c-30 5-50-15-49-35zM902 177a10 15 0 1 0 20 0a10 15 0 1 0-20 0M978 160a10 15 0 1 0 20 0a10 15 0 1 0-20 0M942 230q20 5 45-10q0 25-25 25q-18 0-20-15M948 200v-3M962 196v-3M862 120c-40-25-50 10-47 60q5 30 30 38q20-10 17-40M835 215l8 100q20 20 48 0l-30-110M1018 70q40-5 52 60l10 35M1015 90q0 50 40 75l5 100l20 5M1000 88l20-5
   M712 278q10-8 75 22q8 8 0 15l-60 150q-5 12-20 10q-5 15-20 15q-18-5-15-22q-20-5-15-20zM730 285l-5 18M745 292l-5 18M758 298l-5 18M770 305l-4 16M692 342q45 5 75 20M675 395q40 3 70 20M660 435q50-5 65 40
   M920 340q0-8 60-10q0 15-5 15l-45 3q-8 0-10-8M950 405q30-15 35-60q0-35 40-45l-8-12l35 5l-20 38l-5-15q-25 10-30 45q-5 25-40 45M1010 355q20 10 35 5l-3-15l35 20l-25 22l-3-12q-30 0-40-12
   M380 465l240-108q10 0 7 20l-50 245q-120-40-197-157zM365 460q-30 0-33 20c20 70 90 160 230 180l25-5q5-25-5-30c-110-10-160-80-202-150q-5-15-15-15zM422 487a41 41 0 1 0 82 0a41 41 0 1 0-82 0M527 495a43 43 0 1 0 86 0a43 43 0 1 0-86 0M484 463a9 9 0 1 0 18 0a9 9 0 1 0-18 0M570 495l-22-10M570 495l-20 12M570 495l-5-22M570 495l18-8M570 495l5 15M495 555q5-15 30-5q20 5 35 5q15 10 12 25q-15 15-40 0q-20 10-25-5z
   M645 560q0-15 20-15q10-5 20-20q15-20 30-10q10 10 3 30q10 20 35 15q20 0 15 15c-30 20 10 50-45 55q-30 0-25-45q-50 0-53-25M762 465q60 5 55 40q0 20-30 25q-20-5-18-25zM805 530l18 35q45 50 55 90M820 525l10 30M820 565q10 60 35 90M992 440q0-10 8-12l60-15l20 10M992 440l38 130q5 12 15 10l35-10M1060 415l5 30l15 5M1050 485l-20 20l22 20M1075 470l-12 55
   M25 575q0-25 45-32l90-65q20 50 35 105l15 30q-60 5-145-15q-30 5-40-23zM155 480q20-15 45 20q20 60 15 110q-20 20-40-15q-30-60-20-115zM170 490q20-20 35 45q10 50 0 65M180 530q15 0 12 30l-10 5M72 545l15 55M65 600l10 35q10 10 15-5l-5-30M745 930q90 30 150 30M955 935l100-15`],
  [360, 1280, `M5 45a61 61 0 1 0 122 0M50 42l3 40l35-40M164 72a94 94 0 1 0 188 0a94 94 0 1 0-188 0M180 72a78 78 0 1 0 156 0a78 78 0 1 0-156 0M258 72l-18-58q18-15 36 0zM258 72l18 58q-18 15-36 0zM258 72l-58 18q-20-18 0-36zM258 72l58-18q20 18 0 36zM258 72l-50-30l18-22zM258 72l50-30l-20-24zM258 72l50 35l-22 22zM258 72l-50 35l22 22z
   M440 10q10 40 25 35l180-45M480 50l170-40q10 10-15 20l-145 30zM382 100q10-15 25-5l135 165q0 15-15 10l-145-155zM400 95l20-12l15 20l12-12l18 40l-15 20l-20-15
   M565 160q20-60 80-85q60-20 65 30q0 60-70 105q-20 5-60-5q-30 5-35-15q0-20 20-30M565 150q20 50 50 55M635 75q60 0 75 60M680 65q15-25 30-20q5 30-5 60M780 0q-40 80-30 100q30 40 80 35l15-20M780 0q40 50 95 50l-10 20M845 100a20 20 0 1 0 40 0a20 20 0 1 0-40 0M852 100a12 12 0 1 0 24 0a12 12 0 1 0-24 0M785 0q50-5 95 40
   M95 255q0-10 15-12l150-20l110-45l25 10l15 0l35 185q0 10-10 12l-130 28l-130 45q-15 5-20-8zM105 250l50 205M260 225l42 190M260 225l125-35M155 298l65-12q10 5 5 12l-65 12q-15-3-5-12M338 240l52-10q10 5 3 12l-50 12q-15-3-5-14M308 285l85-18q15 5 3 14l-80 18q-15-3-8-14M315 322l85-18q15 5 3 14l-80 18q-15-3-8-14M325 360l48-12q12 5 3 13l-45 10q-15-2-6-11
   M205 360c-15-35 20-35 12-3c20-25 35 5 8 12c20 20-10 35-17 10c-10 35-40 10-17-5c-30-10-15-35 14-14zM560 280q0-10 10-12l30-8l5-10q30-15 45-10l5 10l30-5q12 0 14 12l8 65q0 12-10 14l-110 22q-12 0-14-10zM610 260l28-6q5 5-2 12l-25 4q-6-5-1-10M604 306a29 29 0 1 0 58 0a29 29 0 1 0-58 0M619 306a14 14 0 1 0 28 0a14 14 0 1 0-28 0M668 264a6 6 0 1 0 12 0a6 6 0 1 0-12 0
   M740 260c0-40 70-45 80 20c10 50 20 90 0 100c-40 10-35-60-70-95q-10-10-10-25zM755 330q10-40 15-65q20 30 55 35l-5 8q-30-10-40-20l-15 45M850 220c-5-90 70-80 75-30c0 50-30 110-50 120c-30 10-40-20-32-45zM850 215q20-15 25-15q20 20 38 60l-8 3q-20-30-30-45q-15 0-30 10M950 240l50-80M970 240l45-75M965 150q-10-70 50-95h65M1050 150l15 90M1080 85q-20-10-30 65h-50q-40-5-35-30M985 110h65M985 135h65q-5-20 0-25M985 135q-5-10 0-25
   M557 470c0-110 170-130 195-15q30 60 0 75q-20 10-40 10M557 470q0 60 40 115q40 5 55-10q0-20-5-25M635 410q-15 40-45 70q-20 0 0 30q10 60 85 35q40-10 50-80M635 410q20 35 75 50q0-25 10-28q15 5 5 35l-20 20M645 515q25 5 35-10M627 484a5 5 0 1 0 10 0a5 5 0 1 0-10 0M671 468a5 5 0 1 0 10 0a5 5 0 1 0-10 0
   M442 450a44 44 0 1 0 88 0a44 44 0 1 0-88 0M470 430l35 10l-12 10l15 15l-8 6l-16-14l-6 13zM335 510q30-5 40-15q25-5 35 20l90 12q5 15-10 17l-85-10q-30 25-50-5q-25 0-20-19M328 575q-5-15 10-14l75 12q25-35 50 0l30 8q10 10-8 18q-20 0-35 5q-20 15-35-10l-75-8q-12 0-12-11M160 530q-40 20-25 65q20 40 60 25q30-20 20-55l-12 0q5 60-45 45q-30-30 5-65l15-3l2 20l25-30l-25-12l0 20
   M0 425l20 12l30 110q0 12-50 25M0 510l22-10l-22-20M940 362l95 35M940 362l-42 150q60 40 65 20l75-130M925 418l105-5M1000 390a48 48 0 1 1 30 50M1012 395a35 35 0 1 1 20 30M1045 400l-20-20M1045 400l5-30M1045 400l28-10M1045 400l20 22M1045 400l-8 28M949 436a6 6 0 1 0 12 0a6 6 0 1 0-12 0M971 448a6 6 0 1 0 12 0a6 6 0 1 0-12 0M993 436a6 6 0 1 0 12 0a6 6 0 1 0-12 0M958 477a6 6 0 1 0 12 0a6 6 0 1 0-12 0
   M750 575q-3-10 8-14l115-28q10 0 14 28M750 575l20 80q5 15 15 12l25-5M800 600q-3-8 8-12l115-30q10 0 14 10l13 60q0 12-10 15M800 600l15 80M803 603l70 30l62-70M850 630l-25 45M940 630l-45-20M525 655a54 54 0 0 1 108 0M565 650l10-30l12 30M640 910l65-10l15 50M605 935a35 35 0 0 1 70 20M0 930l50 30M330 930l50 30M1055 750q25 60 0 90M1055 800h25M760 825q20-10 30-5`],
];

const Doodles = () => (
  <Wallpaper viewBox="0 176 720 1424" aria-hidden="true">
    {bubbles.map(([x, y, r], i) => <circle key={i} cx={x} cy={y} r={r} />)}
    {stars.map(([x, y, r], i) => <path key={i} transform={`translate(${x} ${y})`} d={starPath(r)} />)}
    {sparkles.map(([x, y, r], i) => <path key={i} transform={`translate(${x} ${y})`} d={sparklePath(r)} />)}
    {gears.map(([x, y, r], i) => (
      <g key={i} transform={`translate(${x} ${y})`}><path d={gearPath(r)} /><circle r={r * 0.38} /></g>
    ))}
    {clouds.map(([x, y, s, a], i) => (
      <g key={i} transform={`translate(${x} ${y}) rotate(${a}) scale(${s})`}>
        <path d="M-11 9c-5-2-5-10 1-11c0-6 5-8 8-5c3-6 11-4 11 2c6-1 8 6 5 8c4 3 1 7-4 7c-7 1-15 1-21-1z" />
      </g>
    ))}
    {hearts.map(([x, y, s, a], i) => (
      <g key={i} transform={`translate(${x} ${y}) rotate(${a}) scale(${s})`}>
        <path d="M0 9C-6 5-10 1-9-4C-7-9-1-8 0-4C1-8 7-9 9-4C10 1 6 5 0 9Z" />
      </g>
    ))}
    {drops.map(([x, y, s], i) => (
      <g key={i} transform={`translate(${x} ${y}) scale(${s})`}><path d="M0-8C2-4 5-1 5 3C5 9-5 9-5 3C-5-1-2-4 0-8Z" /></g>
    ))}
    {bolts.map(([x, y, s], i) => (
      <g key={i} transform={`translate(${x} ${y}) scale(${s})`}><path d="M-5-13L9-4L4 0L11 13L-9 4L-4 1Z" /></g>
    ))}
    {planets.map(([x, y, r, a], i) => (
      <g key={i} transform={`translate(${x} ${y}) rotate(${a})`}>
        <path d={`M${-r} 0A${r} ${r} 0 0 1 ${r} 0M${-r * 0.85} ${r * 0.5}A${r} ${r} 0 0 0 ${r * 0.85} ${r * 0.5}`} />
        <path d={`M${-r} -4C${-r * 2.3} -3 ${-r * 1.7} 8 0 8S${r * 2.3} -3 ${r} -4M${-r} 0C-22 1-14 4 0 4S22 1 ${r} 0`} />
      </g>
    ))}
    <path transform="translate(138 360)" d={badgePath} />
    {patches.map(([x, y, d], i) => (
      <g key={i} transform={`translate(${x} ${y}) scale(0.33333)`}><path d={d} /></g>
    ))}
    <text transform="translate(108 317) rotate(-14)" fontSize="37" fontWeight="600">42</text>
    <text transform="translate(634 370) rotate(-10)" fontSize="42" fontWeight="600">24</text>
    <text transform="translate(512 1288) rotate(-14)" fontSize="27" strokeWidth="1">09:28</text>
    <text transform="translate(455 1371) rotate(-12)" fontSize="16" strokeWidth="0.8">W</text>
  </Wallpaper>
);

/* ---------- messages ---------- */

const thread = [
  { w: 547, tail: true, time: '6:01 PM', text: 'Hello Yuvam\nEnter 1: To Place an Order\nEnter 2: To See your Account Details\nEnter 3: To Change Your Address\nEnter 4: To Exit' },
  { w: 191, tail: true, out: true, time: '6:01 PM', text: '1' },
  { w: 457, tail: true, time: '6:02 PM', text: 'Enter Medicine Name.' },
  { w: 263, tail: true, out: true, time: '6:02 PM', text: 'Calpol' },
  { w: 570, tail: true, grouped: true, time: '6:02 PM', text: 'Here is all We could find.\nEnter The NUMBER Next To The\nCorrect Medicine.' },
  { w: 498, grouped: true, time: '6:02 PM', text: '1. Calpol 500 MG Tablet .' },
  { w: 498, grouped: true, time: '6:02 PM', text: '2. Calpol 650 MG Tablet .' },
  { w: 371, time: '6:02 PM', text: '3. Calpol tablet .' },
];

const Message = ({ w, tail, out, grouped, time, text }) => {
  const lines = text.split('\n');
  const last = lines.pop();
  const multi = lines.length > 0;
  return (
    <Bubble $w={w} $tail={tail} $out={out} $grouped={grouped} $multi={multi}>
      {tail && <Tail $out={out} viewBox="0 0 16 26"><path d="M2 0H16V25L0.6 4Q-0.6 0 2 0Z" /></Tail>}
      {lines.map((line) => <Line key={line}>{line}</Line>)}
      <LastRow>
        <Line>{last}</Line>
        <Meta $out={out} $multi={multi}>
          {time}
          {out && (
            <Ticks viewBox="0 0 33 22" fill="none" stroke="#45b5e0" strokeWidth="3">
              <path d="M1.5 12.5l7 7L22 2M15 18l2 2L32 2" />
            </Ticks>
          )}
        </Meta>
      </LastRow>
    </Bubble>
  );
};

export default function App() {
  return (
    <Screen>
      <Global />
      <StatusBar>
        <Clock>6:02</Clock>
        <AppBadge viewBox="0 0 24 24">
          <path d="M3.7 16C4 11 7.5 8 12.2 8S20.6 11 21 16Z" fill="#fff" />
          <path d="M7.6 9.5L6 6.6M16.8 9.5l1.6-2.9" stroke="#fff" strokeWidth="1.2" />
          <circle cx="8.6" cy="12.6" r="0.9" fill="#007bff" /><circle cx="16" cy="12.6" r="0.9" fill="#007bff" />
        </AppBadge>
        <AppBadge viewBox="0 0 24 24" fill="none" stroke="#fff" strokeWidth="1.3">
          <path d="M12.2 6v12M7.6 11v2.5q0 1.8 4.6 2.6M17 11v2q0 1.6-4.8 2.3" />
          <path d="M10.2 8.3l2-3 2 3z" fill="#fff" stroke="none" />
          <circle cx="12.2" cy="18.4" r="1.6" fill="#fff" stroke="none" /><circle cx="7.6" cy="10.6" r="1.5" fill="#fff" stroke="none" />
          <path d="M15.6 9.2h2.8v2.8h-2.8z" fill="#fff" stroke="none" />
        </AppBadge>
        <StatusIcons>
          <StatusGlyph $w={22} $gap={12} viewBox="0 0 22 24" fill="none" stroke="#eef5f3" strokeWidth="2">
            <path d="M1 6l13 11-6 4.6V2.4L14 7 1 17" /><path d="M16.2 9.5l2.7-2.4 2.7 2.4M16.2 14l2.7 2.4 2.7-2.4" strokeWidth="1.7" />
          </StatusGlyph>
          <StatusGlyph $w={20} $gap={9} viewBox="0 0 20 24" fill="none" stroke="#eef5f3" strokeWidth="1.9">
            <circle cx="10" cy="13.2" r="8.6" /><path d="M9.5 8.5v5.2h4.2M0.8 5.6l4-3.6M19.2 5.6l-4-3.6" />
          </StatusGlyph>
          <Stacked $w={32} $gap={10} $top={16.5}><span>6.00</span><span>KB/S</span></Stacked>
          <Stacked $w={16} $gap={9} $top={13}><span>Vo</span><span style={{ letterSpacing: -1 }}>LTE</span></Stacked>
          <StatusGlyph $w={38} $gap={7} viewBox="0 0 38 24" fill="none" stroke="#eef5f3">
            <path d="M0.6 6.3l2.5-2.5 2.5 2.5M0.6 9l2.5 2.5 2.5-2.5" strokeWidth="1.6" />
            <path d="M14 17v5M20.8 15.5V22M28.8 9.5V22M35.8 2.5V22" strokeWidth="3.3" />
            <text x="8" y="12.8" fontSize="12.5" fill="#eef5f3" stroke="none">4G</text>
          </StatusGlyph>
          <Battery>32%</Battery>
          <StatusGlyph $w={14} viewBox="0 0 14 24"><path d="M8.6 1L0.5 13h5.8L3.4 23.5 13.5 10H7.6z" fill="#7fa6a0" /><path d="M5.6 15.5h3.6L3.4 23.5z" fill="#fff" /></StatusGlyph>
        </StatusIcons>
      </StatusBar>

      <Header>
        <BackIcon viewBox="0 0 33 34" fill="none" stroke="#fff" strokeWidth="3.8"><path d="M32 17H4M17.8 2.4L3.2 17l14.6 14.6" /></BackIcon>
        <Avatar>hT</Avatar>
        <Contact>
          <ContactName>+91 73985 20444</ContactName>
          <Presence>online</Presence>
        </Contact>
        <HeaderIcon $w={40} $gap={58} viewBox="0 0 40 44">
          <path d="M3 6h8.500q2 0 2 2c0 3 .4 5.500 1.200 7.600q.4 1.500-.6 2.400l-4 4.200c2.800 5.400 6.500 9 12 11.800l4-4q1-1 2.400-.6c2.300.8 4.700 1.200 7.500 1.200q2 0 2 2V40q0 2-2 2C17.500 42 1 26 1 8q0-2 2-2z" fill="#fff" transform="translate(0 -1)" />
          <path d="M31 4v16M23 12h16" stroke="#fff" strokeWidth="3" />
        </HeaderIcon>
        <HeaderIcon $w={10} $gap={39} viewBox="0 0 10 44" fill="#fff">
          <circle cx="5" cy="10" r="4.200" /><circle cx="5" cy="22" r="4.200" /><circle cx="5" cy="34" r="4.200" />
        </HeaderIcon>
      </Header>

      <Chat>
        <Doodles />
        <ActionBar>
          <Action>BLOCK</Action>
          <Divider />
          <Action>ADD</Action>
        </ActionBar>
        <Messages>
          <DayChip>TODAY</DayChip>
          <Notice>
            <Lock viewBox="0 0 16 20"><rect x="0.500" y="7" width="15" height="12.500" rx="2" fill="#8e8867" /><path d="M4 8V5a4 4 0 0 1 8 0v3" fill="none" stroke="#a9a37f" strokeWidth="1.800" /></Lock>
            Messages and calls are end-to-end encrypted.<br />
            No one outside of this chat, not even WhatsApp, can<br />
            read or listen to them. Tap to learn more.
          </Notice>
          {thread.map((m, i) => <Message key={i} {...m} />)}
        </Messages>
        <Composer>
          <InputPill>
            <FieldIcon viewBox="0 0 44 44">
              <circle cx="21.500" cy="22" r="20" fill="none" stroke="#868d92" strokeWidth="3.200" />
              <ellipse cx="15.900" cy="17.300" rx="2.800" ry="3.700" fill="#868d92" /><ellipse cx="27.300" cy="17.300" rx="2.800" ry="3.700" fill="#868d92" />
              <path d="M10 24.300q12 2.600 23.500 0C33 30 28 34 21.800 34S10.500 30 10 24.300z" fill="#868d92" />
              <path d="M13 27q8.700 1.600 17.500 0q-1 2.300-2.500 2.500q-6 .8-12.500 0q-1.700-.3-2.500-2.500z" fill="#fff" />
            </FieldIcon>
            <Caret />
            <Placeholder>Type a message</Placeholder>
            <FieldIcon viewBox="0 0 44 44" fill="none" stroke="#868d92" strokeWidth="3" strokeLinecap="butt">
              <path d="M23.500 4.500L38.500 19.500c4.500 4.500 5.500 11 1.500 15s-10.500 3-15-1.500L5.500 13.500C2.500 10.500 2 7 4.500 4.800S10.500 3 13.500 6L32 24.500c2 2 2 4.500 .5 6s-4 1-6-1L14.500 17.500" />
            </FieldIcon>
            <FieldIcon $ml={44} viewBox="0 0 44 44">
              <path d="M6 7h5l3-4q1.200-1.500 3.500-1.500h9q2.300 0 3.500 1.500l3 4h2q5 0 5 5v21q0 5-5 5H7q-5 0-5-5V11q0-4 4-4z" fill="#868d92" />
              <circle cx="21.500" cy="21" r="8.300" fill="none" stroke="#fff" strokeWidth="3.200" />
            </FieldIcon>
          </InputPill>
          <MicButton aria-label="Record">
            <svg width="32" height="44" viewBox="0 0 32 44" fill="none" stroke="#fff" strokeWidth="3.600" strokeLinecap="round">
              <rect x="10" y="2" width="12" height="24" rx="6" fill="#fff" stroke="none" />
              <path d="M3 21.500c0 16 26 16 26 0M16 34v7" />
            </svg>
          </MicButton>
        </Composer>
      </Chat>
    </Screen>
  );
}
